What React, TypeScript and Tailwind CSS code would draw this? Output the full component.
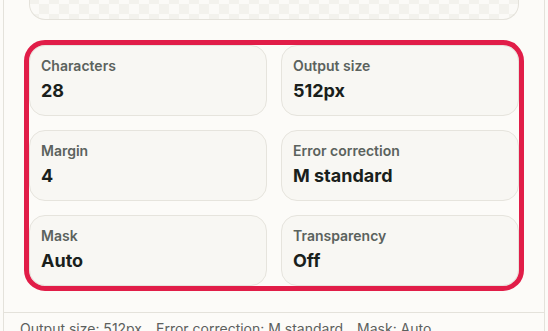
import React from 'react';

// ---------- Stat cards ----------
const stats = [
  { label: 'Characters', value: '28' },
  { label: 'Output size', value: '512px' },
  { label: 'Margin', value: '4' },
  { label: 'Error correction', value: 'M standard' },
  { label: 'Mask', value: 'Auto' },
  { label: 'Transparency', value: 'Off' },
];

function StatCard({ label, value }: { label: string; value: string }) {
  return (
    <div className="rounded-2xl border border-[#e6e4dd] bg-[#f8f7f3] px-[11px] pt-3 pb-3">
      <div className="text-[14px] leading-4 font-semibold text-[#5b625d]">{label}</div>
      <div className="mt-[5px] text-[18px] leading-6 font-bold text-[#1a1f1c]">{value}</div>
    </div>
  );
}

export default function App() {
  return (
    <div
      className="min-h-screen bg-[#fcfbf8] px-[3px] text-[#1a1f1c]"
      style={{ fontFamily: 'Inter, "Noto Sans", sans-serif' }}
    >
      <div className="h-[331px] overflow-hidden border-x border-[#e4e2db] bg-[#fcfbf8]">
        <div className="px-[25px] pb-[26px]">
          {/* bottom of the transparent preview box */}
          <div className="h-5 rounded-b-2xl border-x border-b border-[#e4e2db] bg-[#fbfaf7] bg-[repeating-conic-gradient(#f3f2ed_0_25%,transparent_0_50%)] bg-[length:20px_20px] bg-[position:9px_-6px]" />

          {/* highlighted stats grid */}
          <div className="mt-[25px] grid grid-cols-2 gap-[14px] rounded-2xl outline-[5px] outline-solid outline-[#e11d48]">
            {stats.map((s) => (
              <StatCard key={s.label} label={s.label} value={s.value} />
            ))}
          </div>
        </div>

        {/* summary footer */}
        <div className="flex gap-[14px] border-t border-[#e4e2db] px-4 pt-[6px] text-[14px] leading-5 text-[#5c605d]">
          <span>Output size: 512px</span>
          <span>Error correction: M standard</span>
          <span>Mask: Auto</span>
        </div>
      </div>
    </div>
  );
}
